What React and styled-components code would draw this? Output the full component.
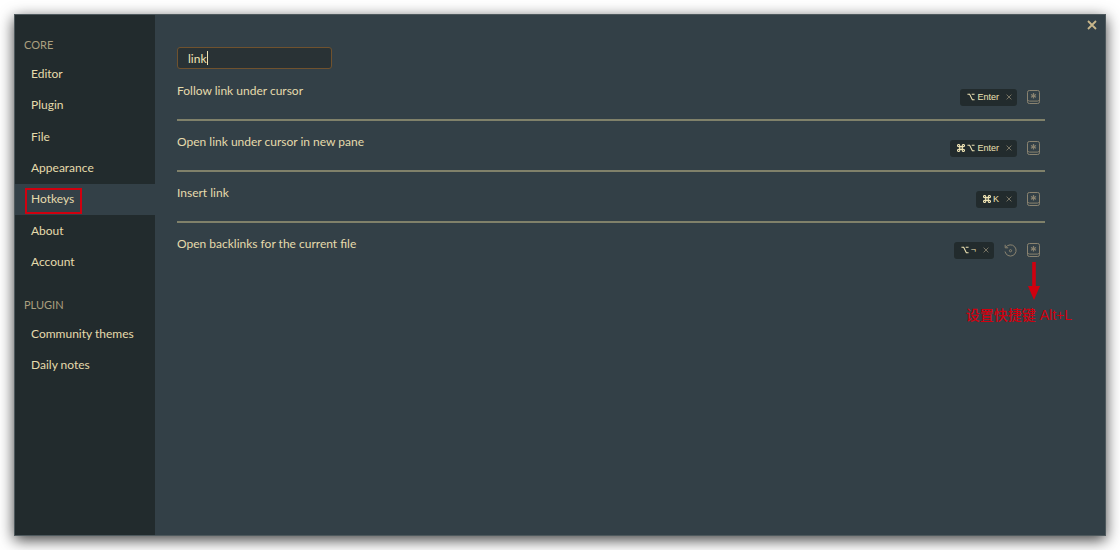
import React from "react";
import styled, { createGlobalStyle } from "styled-components";

const Global = createGlobalStyle`
  * { box-sizing: border-box; }
  html, body, #root { height: 100%; }
  body {
    margin: 0;
    background: #fff;
    color: #e6dbac;
    font-family: Lato, "Noto Sans CJK SC", sans-serif;
    font-size: 12px;
    line-height: 16px;
  }
  ul, h2 { margin: 0; padding: 0; font: inherit; list-style: none; }
  button {
    padding: 0;
    border: 0;
    background: none;
    color: inherit;
    font: inherit;
    cursor: pointer;
  }
  svg { display: block; }
`;

const Page = styled.div`
  min-height: 100%;
  display: flex;
  padding: 14px;
`;

const Dialog = styled.main`
  position: relative;
  flex: 1;
  display: flex;
  border: 1px solid #4e595d;
  background: #334047;
  box-shadow: 0 4px 14px rgba(0, 0, 0, 0.75);
`;

const Sidebar = styled.nav`
  flex: none;
  width: 140px;
  padding-top: 22px;
  background: #222b2d;
`;

const GroupTitle = styled.h2`
  padding-left: 9px;
  color: #ab9f7f;
  font-size: 11px;
`;

const Group = styled.ul`
  display: grid;
  grid-auto-rows: 1fr;
  height: ${(p) => p.$height}px;
  margin: 5px 0 19px;
`;

const NavItem = styled.li`
  display: flex;
  background: ${(p) => (p.$active ? "#334047" : "none")};
`;

const NavLink = styled.a`
  position: relative;
  flex: 1;
  display: flex;
  align-items: center;
  padding-left: 16px;
  color: inherit;
  text-decoration: none;
`;

const Highlight = styled.span`
  position: absolute;
  left: 10px;
  top: 4px;
  width: 57px;
  height: 26px;
  border: 2px solid #d0000f;
`;

const Content = styled.section`
  flex: 1;
  padding: 32px 60px 32px 22px;
`;

const SearchField = styled.div`
  position: relative;
  width: 155px;
  margin-bottom: 1px;
`;

const Search = styled.input`
  display: block;
  width: 100%;
  height: 22px;
  padding: 0 10px;
  border: 1px solid #70522e;
  border-radius: 3px;
  outline: none;
  background: #293235;
  color: #efe4b4;
  caret-color: transparent;
  font: inherit;
`;

const Caret = styled.span`
  position: absolute;
  top: 4px;
  left: 30px;
  width: 1px;
  height: 14px;
  background: #efe4b4;
`;

const HotkeyRow = styled.li`
  display: flex;
  justify-content: space-between;
  height: 51px;
  padding: 13px 5px 0 0;
  border-bottom: ${(p) => (p.$last ? "0" : "2px solid #80816a")};
`;

const Actions = styled.div`
  display: flex;
  align-items: center;
  gap: 10px;
  height: 28px;
`;

const Chip = styled.span`
  display: flex;
  align-items: center;
  gap: 7px;
  height: 17px;
  padding: 0 5px 0 7px;
  border-radius: 3px;
  background: #222b2d;
  color: #efe4b4;
  font: 9px/17px "Liberation Sans", "DejaVu Sans", sans-serif;
`;

const Keys = styled.kbd`
  display: flex;
  align-items: center;
  gap: 2px;
  font: inherit;
`;

const IconButton = styled.button`
  color: ${(p) => (p.$bright ? "#c9b78b" : "#8a8370")};
`;

const Close = styled(IconButton)`
  position: absolute;
  top: 5px;
  right: 8px;
`;

const Note = styled.div`
  position: absolute;
  top: 247px;
  right: 33px;
  display: grid;
  justify-items: end;
  color: #d0000f;
  font: 500 14px/20px "Liberation Sans", "Noto Sans CJK SC", sans-serif;
`;

const Arrow = styled.svg`
  margin: 0 32px 5px 0;
`;

const Cross = ({ size, width = 1 }) => (
  <svg width={size} height={size} viewBox="0 0 10 10" stroke="currentColor" strokeWidth={width} aria-hidden="true">
    <path d="M1 1l8 8M9 1l-8 8" />
  </svg>
);

const Option = () => (
  <svg width="8" height="8" viewBox="0 0 9 8" fill="none" stroke="currentColor" strokeWidth="1.2" aria-label="Option">
    <path d="M0.5 1H3L6 7H8.5M5.3 1H8.5" />
  </svg>
);

const Command = () => (
  <svg width="8" height="8" viewBox="0 0 8 8" fill="none" stroke="currentColor" strokeWidth="1.2" aria-label="Command">
    <path d="M2.7 1.7a1.1 1.1 0 1 0-1 1h4.6a1.1 1.1 0 1 0-1-1v4.6a1.1 1.1 0 1 0 1-1H1.7a1.1 1.1 0 1 0 1 1z" />
  </svg>
);

const KeyIcon = () => (
  <svg width="13" height="14" viewBox="0 0 13 14" fill="none" stroke="currentColor" aria-hidden="true">
    <rect x="0.5" y="0.5" width="12" height="13" rx="1.8" />
    <path d="M0.6 9.8q0.5 1.3 1.9 1.3h8q1.4 0 1.9-1.3" />
    <path strokeWidth="1.2" d="M6.5 3v5.6M4 4.4l5 2.8M9 4.4L4 7.2" />
  </svg>
);

const RestoreIcon = () => (
  <svg width="13" height="13" viewBox="0 0 13 13" fill="none" stroke="currentColor" aria-hidden="true">
    <path d="M1.8 3.4A5.6 5.6 0 1 1 1 7.5M1.2 0.8v3h3" />
    <circle cx="6.5" cy="6.7" r="1.1" />
  </svg>
);

const groups = [
  {
    title: "CORE",
    height: 220,
    items: ["Editor", "Plugin", "File", "Appearance", "Hotkeys", "About", "Account"],
  },
  { title: "PLUGIN", height: 63, items: ["Community themes", "Daily notes"] },
];

const hotkeys = [
  { name: "Follow link under cursor", keys: ["option", "Enter"] },
  { name: "Open link under cursor in new pane", keys: ["command", "option", "Enter"] },
  { name: "Insert link", keys: ["command", "K"] },
  { name: "Open backlinks for the current file", keys: ["option", "¬"], restorable: true },
];

const Key = ({ name }) => {
  if (name === "option") return <Option />;
  if (name === "command") return <Command />;
  return <span>{name}</span>;
};

export default function App() {
  return (
    <Page>
      <Global />
      <Dialog>
        <Sidebar>
          {groups.map((group) => (
            <React.Fragment key={group.title}>
              <GroupTitle>{group.title}</GroupTitle>
              <Group $height={group.height}>
                {group.items.map((item) => (
                  <NavItem key={item} $active={item === "Hotkeys"}>
                    <NavLink href="#">
                      {item}
                      {item === "Hotkeys" && <Highlight />}
                    </NavLink>
                  </NavItem>
                ))}
              </Group>
            </React.Fragment>
          ))}
        </Sidebar>
        <Content>
          <SearchField>
            <Search aria-label="Filter hotkeys" defaultValue="link" />
            <Caret />
          </SearchField>
          <ul>
            {hotkeys.map((hotkey, i) => (
              <HotkeyRow key={hotkey.name} $last={i === hotkeys.length - 1}>
                <span>{hotkey.name}</span>
                <Actions>
                  <Chip>
                    <Keys>
                      {hotkey.keys.map((key) => (
                        <Key key={key} name={key} />
                      ))}
                    </Keys>
                    <IconButton aria-label="Remove hotkey">
                      <Cross size={6} width={1.4} />
                    </IconButton>
                  </Chip>
                  {hotkey.restorable && (
                    <IconButton aria-label="Restore default">
                      <RestoreIcon />
                    </IconButton>
                  )}
                  <IconButton aria-label="Customize hotkey">
                    <KeyIcon />
                  </IconButton>
                </Actions>
              </HotkeyRow>
            ))}
          </ul>
        </Content>
        <Close $bright aria-label="Close">
          <Cross size={10} width={1.8} />
        </Close>
        <Note>
          <Arrow width="12" height="38" viewBox="0 0 12 38" fill="currentColor" aria-hidden="true">
            <path d="M4.2 0h3.6v24H12L6 38 0 24h4.2z" />
          </Arrow>
          <span>设置快捷键 Alt+L</span>
        </Note>
      </Dialog>
    </Page>
  );
}
